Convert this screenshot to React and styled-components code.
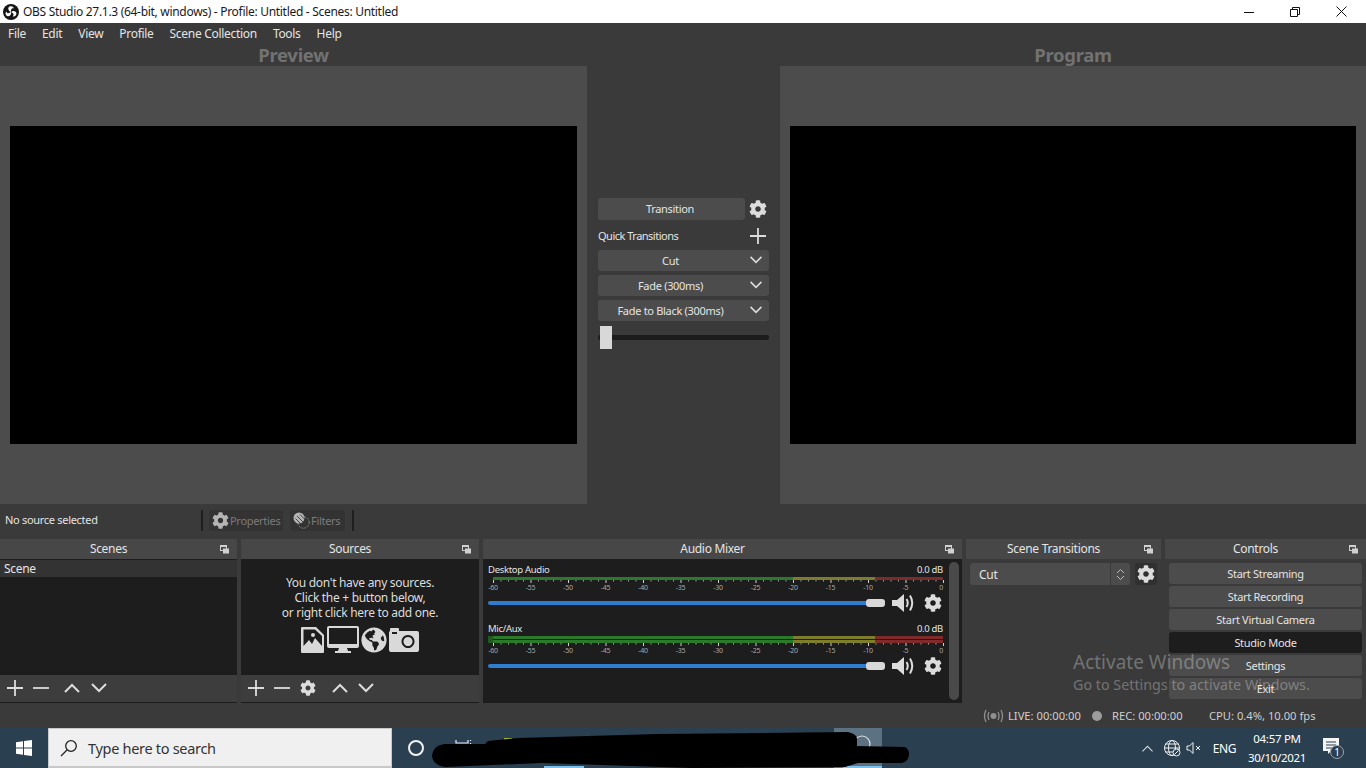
import { createGlobalStyle, styled } from 'styled-components';
import { FaCog, FaGlobeAmericas } from 'react-icons/fa';

const GlobalStyle = createGlobalStyle`
	html, body {
		margin: 0;
		width: 1366px;
		height: 768px;
		overflow: hidden;
		background: #3a3a3a;
	}
	* {
		box-sizing: border-box;
	}
	body {
		font-family: "Noto Sans", "Open Sans", "Liberation Sans", sans-serif;
		font-size: 11px;
		letter-spacing: -0.3px;
		color: #e4e4e4;
	}
`;

const Page = styled.div`
	position: relative;
	width: 1366px;
	height: 768px;
	display: flex;
	flex-direction: column;
	overflow: hidden;
`;

const TitleBar = styled.div`
	height: 23px;
	background: #fff;
	color: #1a1a1a;
	display: flex;
	align-items: center;
	padding: 0 2px 0 3px;
	gap: 4px;
	font-size: 12px;
`;

const TitleText = styled.div`
	flex: 1;
	white-space: nowrap;
`;

const WinButtons = styled.div`
	display: flex;
`;

const WinButton = styled.div`
	width: 46px;
	height: 23px;
	display: flex;
	align-items: center;
	justify-content: center;
`;

const MenuBar = styled.div`
	height: 22px;
	display: flex;
	align-items: center;
	background: #3a3a3a;
	font-size: 12px;
	padding-bottom: 2px;
`;

const MenuItem = styled.div`
	padding: 0 8px;
	white-space: nowrap;
`;

const Main = styled.div`
	height: 459px;
	display: grid;
	grid-template-columns: 587px 193px 586px;
`;

const PreviewColumn = styled.div`
	display: flex;
	flex-direction: column;
`;

const PreviewLabel = styled.div`
	height: 21px;
	line-height: 19px;
	text-align: center;
	font-weight: 700;
	font-size: 18.5px;
	color: #727272;
`;

const PreviewPanel = styled.div`
	flex: 1;
	background: #4c4c4c;
	display: flex;
	align-items: center;
	justify-content: center;
`;

const Screen = styled.div`
	width: ${(p) => p.$width}px;
	height: 318px;
	background: #000;
`;

const CenterColumn = styled.div`
	padding: 153px 11px 0;
	display: flex;
	flex-direction: column;
	background: #3a3a3a;
`;

const CenterRow = styled.div`
	display: flex;
	align-items: center;
	justify-content: space-between;
	height: ${(p) => p.$height}px;
	margin-bottom: ${(p) => p.$gap || 0}px;
`;

const QuickLabel = styled.span`
	letter-spacing: -0.5px;
`;

const RowIcon = styled.div`
	width: 22px;
	display: flex;
	justify-content: center;
	color: #dcdcdc;
`;

const Button = styled.div`
	height: ${(p) => p.$height || 21}px;
	width: ${(p) => (p.$width ? `${p.$width}px` : 'auto')};
	flex: ${(p) => (p.$width ? 'none' : 1)};
	background: ${(p) => (p.$active ? '#1d1d1e' : '#4c4c4c')};
	border-radius: 3px;
	display: flex;
	align-items: center;
	justify-content: center;
	white-space: nowrap;
`;

const TransitionButton = styled(Button)`
	padding: 0 3px 2px 0;
`;

const ComboButton = styled(Button)`
	position: relative;
	padding-right: 26px;
	& > svg {
		position: absolute;
		right: 6px;
		top: 3px;
	}
`;

const ControlButton = styled(Button)`
	flex: none;
`;

const TBar = styled.div`
	position: relative;
	height: 23px;
	display: flex;
	align-items: center;
	margin-top: 1px;
`;

const TBarTrack = styled.div`
	flex: 1;
	height: 5px;
	background: #1c1c1c;
	border-radius: 2px;
`;

const TBarHandle = styled.div`
	position: absolute;
	left: 2px;
	top: 0;
	width: 12px;
	height: 23px;
	background: #d8d8d8;
`;

const ContextBar = styled.div`
	height: 32px;
	display: flex;
	align-items: center;
	background: #3a3a3a;
	padding-left: 5px;
`;

const ContextLabel = styled.div`
	width: 196px;
	white-space: nowrap;
	padding-bottom: 2px;
`;

const ContextSep = styled.div`
	width: 2px;
	height: 21px;
	background: #1f1f1f;
	margin-right: ${(p) => p.$gap}px;
`;

const ContextButton = styled.div`
	height: 21px;
	width: ${(p) => p.$width}px;
	margin-right: ${(p) => p.$gap}px;
	padding-left: 3px;
	background: #333;
	border-radius: 3px;
	color: #7b7b7b;
	display: flex;
	align-items: center;
	gap: 1px;
	white-space: nowrap;
`;

const Docks = styled.div`
	margin-top: 3px;
	height: 164px;
	display: grid;
	grid-template-columns: 237px 238px 479px 195px 201px;
	column-gap: 4px;
`;

const Dock = styled.div`
	display: flex;
	flex-direction: column;
	min-width: 0;
`;

const DockHeader = styled.div`
	height: 20px;
	flex: none;
	background: #474747;
	display: flex;
	align-items: center;
	padding-right: 8px;
	font-size: 12px;
`;

const DockTitle = styled.div`
	flex: 1;
	text-align: center;
	white-space: nowrap;
	padding: 0 3px 2px 0;
`;

const DockBody = styled.div`
	flex: 1;
	display: flex;
	flex-direction: column;
	background: ${(p) => (p.$plain ? '#3a3a3a' : '#1d1d1e')};
	min-height: 0;
`;

const SceneItem = styled.div`
	height: 17px;
	margin-top: 1px;
	line-height: 17px;
	padding-left: 4px;
	background: #333334;
	font-size: 12px;
`;

const ListArea = styled.div`
	flex: 1;
`;

const EmptyHint = styled.div`
	flex: 1;
	display: flex;
	flex-direction: column;
	align-items: center;
	padding-top: 16px;
	line-height: 15px;
	font-size: 12px;
	text-align: center;
	color: #dcdcdc;
`;

const HintIcons = styled.div`
	display: flex;
	align-items: center;
	gap: 2px;
	margin: 6px 1px 0 0;
	color: #d9d9d9;
`;

const Toolbar = styled.div`
	height: 28px;
	flex: none;
	background: #3d3d3d;
	border-bottom: 1px solid #1c1c1c;
	display: flex;
	align-items: center;
	padding: 0 0 2px 2px;
`;

const ToolButton = styled.div`
	width: 26px;
	height: 25px;
	display: flex;
	align-items: center;
	justify-content: center;
	margin-left: ${(p) => p.$gap || 0}px;
	color: #dcdcdc;
`;

const MixerBody = styled.div`
	position: relative;
	flex: 1;
	background: #1d1d1e;
	padding: 4px 5px 0;
`;

const Scrollbar = styled.div`
	position: absolute;
	right: 3px;
	top: 3px;
	bottom: 3px;
	width: 10px;
	border-radius: 5px;
	background: #4a4a4a;
`;

const Channel = styled.div`
	margin-bottom: 7px;
`;

const ChannelHead = styled.div`
	width: 455px;
	height: 12px;
	line-height: 14px;
	margin-bottom: 2px;
	display: flex;
	justify-content: space-between;
	font-size: 9.5px;
`;

const MeterSvg = styled.svg`
	display: block;
`;

const Fader = styled.div`
	height: 24px;
	display: flex;
	align-items: center;
`;

const FaderTrack = styled.div`
	position: relative;
	width: 397px;
	height: 4px;
	border-radius: 2px;
	background: #2f7dd1;
	margin-right: 7px;
`;

const FaderHandle = styled.div`
	position: absolute;
	right: 0;
	top: -2px;
	width: 19px;
	height: 8px;
	border-radius: 3px;
	background: #d8d8d8;
`;

const FaderGear = styled.div`
	margin-left: 9px;
	display: flex;
	color: #dcdcdc;
`;

const TransitionRow = styled.div`
	display: flex;
	padding: 4px 4px 0;
	gap: 5px;
`;

const Select = styled.div`
	width: 160px;
	height: 22px;
	background: #4c4c4c;
	border-radius: 3px;
	display: flex;
	align-items: center;
	padding-left: 9px;
	font-size: 12px;
`;

const SelectText = styled.div`
	flex: 1;
`;

const SelectSpin = styled.div`
	width: 20px;
	height: 22px;
	border-left: 1px solid #3a3a3a;
	display: flex;
	align-items: center;
	justify-content: center;
`;

const DarkGear = styled.div`
	width: 22px;
	height: 22px;
	background: #303030;
	border-radius: 3px;
	display: flex;
	align-items: center;
	justify-content: center;
	color: #dcdcdc;
`;

const ControlsList = styled.div`
	display: flex;
	flex-direction: column;
	gap: 2px;
	padding: 4px 4px 0;
`;

const StatusBar = styled.div`
	height: 25px;
	display: flex;
	align-items: center;
	background: #3a3a3a;
	padding-left: 983px;
	color: #cfcfcf;
	font-size: 11.2px;
	letter-spacing: 0;
	white-space: nowrap;
`;

const StatusItem = styled.div`
	display: flex;
	align-items: center;
	width: ${(p) => p.$width}px;
	gap: ${(p) => p.$gap || 0}px;
`;

const RecDot = styled.div`
	width: 10px;
	height: 10px;
	border-radius: 50%;
	background: #9c9c9c;
`;

const Taskbar = styled.div`
	position: relative;
	height: 40px;
	background: #2a3f50;
	display: flex;
	align-items: center;
	color: #fff;
`;

const StartButton = styled.div`
	width: 48px;
	display: flex;
	justify-content: center;
`;

const SearchBox = styled.div`
	width: 344px;
	height: 40px;
	background: #f0f0f0;
	border: 1px solid #c8c8c8;
	border-bottom-width: 2px;
	color: #333;
	font-size: 14.5px;
	display: flex;
	align-items: center;
	padding-left: 11px;
	gap: 10px;
`;

const CortanaRing = styled.div`
	width: 16px;
	height: 16px;
	margin-left: 16px;
	border: 2.5px solid #f2f2f2;
	border-radius: 50%;
`;

const TaskTile = styled.div`
	position: absolute;
	left: 834px;
	top: 0;
	width: 48px;
	height: 40px;
	background: #5c7182;
`;

const TaskUnderline = styled.div`
	position: absolute;
	left: ${(p) => p.$left}px;
	bottom: 0;
	width: ${(p) => p.$width}px;
	height: 2px;
	background: #7cc1ee;
`;

const Scribble = styled.svg`
	position: absolute;
	left: 425px;
	top: 0;
`;

const Tray = styled.div`
	margin-left: auto;
	height: 40px;
	display: flex;
	align-items: center;
	padding-right: 7px;
`;

const TraySlot = styled.div`
	width: ${(p) => p.$width}px;
	display: flex;
	justify-content: center;
	align-items: center;
	font-size: ${(p) => p.$size || 12}px;
`;

const Clock = styled.div`
	text-align: center;
	line-height: 19px;
	font-size: 11.5px;
	width: 60px;
	white-space: nowrap;
`;

const ActivateNotice = styled.div`
	position: absolute;
	left: 1073px;
	top: 650px;
	color: rgba(255, 255, 255, 0.3);
	letter-spacing: 0;
	pointer-events: none;
	white-space: nowrap;
`;

const ActivateTitle = styled.div`
	font-size: 19px;
	line-height: 25px;
`;

const ActivateLine = styled.div`
	font-size: 14.3px;
	line-height: 20px;
`;

const ObsLogo = () => (
	<svg width="16" height="16" viewBox="0 0 16 16">
		<circle cx="8" cy="8" r="8" fill="#151515" />
		{[0, 120, 240].map((angle) => (
			<path
				key={angle}
				d="M8 8 C5 7 4.5 4 6.5 2.6 C8.5 1.6 10.5 2.6 10.8 4.4 C9 3.6 7.6 5 8 8 Z"
				fill="#fff"
				transform={`rotate(${angle} 8 8)`}
			/>
		))}
	</svg>
);

const Chevron = ({ up, size = 18, width = 2 }) => (
	<svg width={size} height={size} viewBox="0 0 18 18" fill="none" stroke="#dcdcdc" strokeWidth={width}>
		<path d={up ? 'M2 13 L9 6 L16 13' : 'M2 5 L9 12 L16 5'} />
	</svg>
);

const Plus = ({ size = 16 }) => (
	<svg width={size} height={size} viewBox="0 0 16 16" stroke="#dcdcdc" strokeWidth="1.8">
		<path d="M8 0 V16 M0 8 H16" />
	</svg>
);

const Minus = () => (
	<svg width="16" height="16" viewBox="0 0 16 16" stroke="#dcdcdc" strokeWidth="1.8">
		<path d="M0 8 H16" />
	</svg>
);

const FloatIcon = () => (
	<svg width="9" height="9" viewBox="0 0 9 9">
		<rect x="0.5" y="0.5" width="6" height="5" fill="none" stroke="#d0d0d0" />
		<rect x="0.5" y="0.5" width="6" height="1.5" fill="#d0d0d0" />
		<rect x="3" y="3.5" width="6" height="5" fill="#d0d0d0" />
	</svg>
);

const Speaker = () => (
	<svg width="23" height="20" viewBox="0 0 23 20" fill="none">
		<path d="M0 7 H5 L12 1 V19 L5 13 H0 Z" fill="#dcdcdc" />
		<path d="M14.5 6 Q17 10 14.5 14" stroke="#dcdcdc" strokeWidth="2" />
		<path d="M18 2.5 Q22.5 10 18 17.5" stroke="#dcdcdc" strokeWidth="2" />
	</svg>
);

const ImageIcon = () => (
	<svg width="24" height="26" viewBox="0 0 24 26">
		<path
			fillRule="evenodd"
			d="M1 0 H15 L23 8 V25 a1 1 0 0 1 -1 1 H1 a1 1 0 0 1 -1 -1 V1 a1 1 0 0 1 1 -1 Z M2.5 2.5 V19 L8 13 L11 17 L14 11 L21 19 V9 L14 2.5 Z"
			fill="currentColor"
		/>
		<circle cx="12" cy="8" r="2" fill="currentColor" />
	</svg>
);

const MonitorIcon = () => (
	<svg width="32" height="27" viewBox="0 0 32 27">
		<path
			fillRule="evenodd"
			d="M2 0 H30 a2 2 0 0 1 2 2 V20 a2 2 0 0 1 -2 2 H20 L21 25 H24 V27 H8 V25 H11 L12 22 H2 a2 2 0 0 1 -2 -2 V2 a2 2 0 0 1 2 -2 Z M2 2 V18 H30 V2 Z"
			fill="currentColor"
		/>
	</svg>
);

const CameraIcon = () => (
	<svg width="30" height="24" viewBox="0 0 30 24">
		<path
			fillRule="evenodd"
			d="M1 3 V1 a1 1 0 0 1 1 -1 H9 a1 1 0 0 1 1 1 V3 H28 a2 2 0 0 1 2 2 V22 a2 2 0 0 1 -2 2 H2 a2 2 0 0 1 -2 -2 V5 a2 2 0 0 1 1 -2 Z M3 4 V6 H8 V4 Z M19 7 a6.5 6.5 0 1 0 0.01 0 Z M19 9 a4.5 4.5 0 1 1 -0.01 0 Z"
			fill="currentColor"
		/>
	</svg>
);

const FilterIcon = () => (
	<svg width="17" height="17" viewBox="0 0 17 17" fill="none">
		<circle cx="10.5" cy="10.5" r="5.7" stroke="#9a9a9a" strokeWidth="1" strokeDasharray="1.6 1.4" />
		<circle cx="6" cy="6" r="5.5" fill="#b4b4b4" />
		<path d="M4 4 L11 11 M2.5 6.5 L8 12 M7 2.5 L13 8.5" stroke="#3a3a3a" strokeWidth="0.9" />
	</svg>
);

const Meter = ({ stereo }) => {
	const barHeight = stereo ? 7 : 3;
	const x0 = 5;
	const scale = 7.5;
	const labels = [-60, -55, -50, -45, -40, -35, -30, -25, -20, -15, -10, -5, 0];
	const ticks = Array.from({ length: 61 }, (_, i) => i);
	const segments = [
		{ x: x0, w: 300, c: '#2b7a2b' },
		{ x: 305, w: 82, c: '#7d7d2b' },
		{ x: 387, w: 68, c: '#7f2b2b' },
	];
	return (
		<MeterSvg width="460" height={barHeight + 11} viewBox={`0 0 460 ${barHeight + 11}`}>
			{segments.map((s) =>
				stereo ? (
					<g key={s.x}>
						<rect x={s.x} y="0" width={s.w} height="3" fill={s.c} />
						<rect x={s.x} y="4" width={s.w} height="3" fill={s.c} />
					</g>
				) : (
					<rect key={s.x} x={s.x} y="0" width={s.w} height="3" fill={s.c} />
				),
			)}
			{stereo && <rect x="0" y="0" width="5" height="7" fill="#1f5a1f" />}
			{ticks.map((i) => (
				<rect
					key={i}
					x={x0 + i * scale}
					y={barHeight}
					width="1"
					height={i % 5 === 0 ? 3 : 1.5}
					fill={i % 5 === 0 ? '#d0d0d0' : '#9a9a9a'}
				/>
			))}
			{labels.map((db) => (
				<text
					key={db}
					x={db === 0 ? 455 : x0 + (db + 60) * scale}
					y={barHeight + 10}
					textAnchor={db === 0 ? 'end' : 'middle'}
					fontSize="7"
					fill="#a8a8a8"
				>
					{db}
				</text>
			))}
		</MeterSvg>
	);
};

const MixerChannel = ({ name, stereo }) => (
	<Channel>
		<ChannelHead>
			<span>{name}</span>
			<span>0.0 dB</span>
		</ChannelHead>
		<Meter stereo={stereo} />
		<Fader>
			<FaderTrack>
				<FaderHandle />
			</FaderTrack>
			<Speaker />
			<FaderGear>
				<FaCog size={18} />
			</FaderGear>
		</Fader>
	</Channel>
);

const DockPanel = ({ title, children }) => (
	<Dock>
		<DockHeader>
			<DockTitle>{title}</DockTitle>
			<FloatIcon />
		</DockHeader>
		{children}
	</Dock>
);

const menus = ['File', 'Edit', 'View', 'Profile', 'Scene Collection', 'Tools', 'Help'];
const controls = ['Start Streaming', 'Start Recording', 'Start Virtual Camera', 'Studio Mode', 'Settings', 'Exit'];
const combos = ['Cut', 'Fade (300ms)', 'Fade to Black (300ms)'];

export default function App() {
	return (
		<Page>
			<GlobalStyle />
			<TitleBar>
				<ObsLogo />
				<TitleText>OBS Studio 27.1.3 (64-bit, windows) - Profile: Untitled - Scenes: Untitled</TitleText>
				<WinButtons>
					<WinButton>
						<svg width="10" height="10" viewBox="0 0 10 10" stroke="#111">
							<path d="M0 5.5 H10" />
						</svg>
					</WinButton>
					<WinButton>
						<svg width="10" height="10" viewBox="0 0 10 10" fill="none" stroke="#111">
							<path d="M0.5 2.5 H7.5 V9.5 H0.5 Z M2.5 2.5 V0.5 H9.5 V7.5 H7.5" />
						</svg>
					</WinButton>
					<WinButton>
						<svg width="11" height="11" viewBox="0 0 11 11" stroke="#111">
							<path d="M0.5 0.5 L10.5 10.5 M10.5 0.5 L0.5 10.5" />
						</svg>
					</WinButton>
				</WinButtons>
			</TitleBar>
			<MenuBar>
				{menus.map((menu) => (
					<MenuItem key={menu}>{menu}</MenuItem>
				))}
			</MenuBar>
			<Main>
				<PreviewColumn>
					<PreviewLabel>Preview</PreviewLabel>
					<PreviewPanel>
						<Screen $width={567} />
					</PreviewPanel>
				</PreviewColumn>
				<CenterColumn>
					<CenterRow $height={22} $gap={5}>
						<TransitionButton $width={147} $height={22}>Transition</TransitionButton>
						<RowIcon><FaCog size={18} /></RowIcon>
					</CenterRow>
					<CenterRow $height={21} $gap={4}>
						<QuickLabel>Quick Transitions</QuickLabel>
						<RowIcon><Plus /></RowIcon>
					</CenterRow>
					{combos.map((combo) => (
						<CenterRow key={combo} $height={21} $gap={4}>
							<ComboButton>
								{combo}
								<Chevron size={14} />
							</ComboButton>
						</CenterRow>
					))}
					<TBar>
						<TBarTrack />
						<TBarHandle />
					</TBar>
				</CenterColumn>
				<PreviewColumn>
					<PreviewLabel>Program</PreviewLabel>
					<PreviewPanel>
						<Screen $width={566} />
					</PreviewPanel>
				</PreviewColumn>
			</Main>
			<ContextBar>
				<ContextLabel>No source selected</ContextLabel>
				<ContextSep $gap={6} />
				<ContextButton $width={74} $gap={7}>
					<FaCog size={17} color="#b4b4b4" />
					Properties
				</ContextButton>
				<ContextButton $width={55} $gap={7}>
					<FilterIcon />
					Filters
				</ContextButton>
				<ContextSep $gap={0} />
			</ContextBar>
			<Docks>
				<DockPanel title="Scenes">
					<DockBody>
						<SceneItem>Scene</SceneItem>
						<ListArea />
						<Toolbar>
							<ToolButton><Plus /></ToolButton>
							<ToolButton><Minus /></ToolButton>
							<ToolButton $gap={5}><Chevron up /></ToolButton>
							<ToolButton $gap={1}><Chevron /></ToolButton>
						</Toolbar>
					</DockBody>
				</DockPanel>
				<DockPanel title="Sources">
					<DockBody>
						<EmptyHint>
							<div>You don't have any sources.</div>
							<div>Click the + button below,</div>
							<div>or right click here to add one.</div>
							<HintIcons>
								<ImageIcon />
								<MonitorIcon />
								<FaGlobeAmericas size={26} />
								<CameraIcon />
							</HintIcons>
						</EmptyHint>
						<Toolbar>
							<ToolButton><Plus /></ToolButton>
							<ToolButton><Minus /></ToolButton>
							<ToolButton><FaCog size={16} /></ToolButton>
							<ToolButton $gap={6}><Chevron up /></ToolButton>
							<ToolButton><Chevron /></ToolButton>
						</Toolbar>
					</DockBody>
				</DockPanel>
				<DockPanel title="Audio Mixer">
					<MixerBody>
						<MixerChannel name="Desktop Audio" />
						<MixerChannel name="Mic/Aux" stereo />
						<Scrollbar />
					</MixerBody>
				</DockPanel>
				<DockPanel title="Scene Transitions">
					<DockBody $plain>
						<TransitionRow>
							<Select>
								<SelectText>Cut</SelectText>
								<SelectSpin>
									<svg width="9" height="13" viewBox="0 0 9 13" fill="none" stroke="#bdbdbd">
										<path d="M1 5 L4.5 1.5 L8 5 M1 8 L4.5 11.5 L8 8" />
									</svg>
								</SelectSpin>
							</Select>
							<DarkGear>
								<FaCog size={18} />
							</DarkGear>
						</TransitionRow>
					</DockBody>
				</DockPanel>
				<DockPanel title="Controls">
					<DockBody $plain>
						<ControlsList>
							{controls.map((label) => (
								<ControlButton key={label} $active={label === 'Studio Mode'}>{label}</ControlButton>
							))}
						</ControlsList>
					</DockBody>
				</DockPanel>
			</Docks>
			<StatusBar>
				<StatusItem $width={109} $gap={4}>
					<svg width="21" height="14" viewBox="0 0 21 14" fill="none" stroke="#8f8f8f" strokeWidth="1.3">
						<circle cx="10.5" cy="7" r="3" fill="#8f8f8f" stroke="none" />
						<path d="M6 3 Q4 7 6 11 M15 3 Q17 7 15 11 M3 1 Q0 7 3 13 M18 1 Q21 7 18 13" />
					</svg>
					LIVE: 00:00:00
				</StatusItem>
				<StatusItem $width={117} $gap={10}>
					<RecDot />
					REC: 00:00:00
				</StatusItem>
				<StatusItem $width={120}>CPU: 0.4%, 10.00 fps</StatusItem>
			</StatusBar>
			<Taskbar>
				<StartButton>
					<svg width="16" height="16" viewBox="0 0 16 16" fill="#fff">
						<path d="M0 2.3 L7 1.2 V7.5 H0 Z M8 1 L16 0 V7.5 H8 Z M0 8.5 H7 V14.8 L0 13.7 Z M8 8.5 H16 V16 L8 15 Z" />
					</svg>
				</StartButton>
				<SearchBox>
					<svg width="18" height="18" viewBox="0 0 18 18" fill="none" stroke="#222" strokeWidth="1.3">
						<circle cx="11" cy="7" r="5.3" />
						<path d="M7 11 L1 17" />
					</svg>
					Type here to search
				</SearchBox>
				<CortanaRing />
				<TaskTile />
				<TaskUnderline $left={544} $width={40} />
				<TaskUnderline $left={843} $width={39} />
				<Scribble width="490" height="40" viewBox="0 0 490 40">
					<path d="M31 12 V15 H43 V12 M45.5 12 V13 M45.5 15 V16" fill="none" stroke="#eef" strokeWidth="1.2" />
					<rect x="79" y="10" width="8" height="4" fill="#a8b820" />
					<circle cx="437" cy="16" r="8" fill="none" stroke="#e0e0e0" strokeWidth="1.2" />
					<path
						d="M7 28 Q8 17 20 16 L60 16 L63 13 L93 10 L233 6 L423 4 Q432 6 432 11 L432 18 L480 19 Q484 21 484 26 Q484 33 477 35 L433 35 L420 39 L267 40 L117 35 L20 39 Q8 37 7 28 Z"
						fill="#000"
					/>
				</Scribble>
				<Tray>
					<TraySlot $width={26}>
						<Chevron up size={13} width={1.4} />
					</TraySlot>
					<TraySlot $width={24}>
						<svg width="18" height="18" viewBox="0 0 18 18" fill="none" stroke="#f0f0f0" strokeWidth="1">
							<circle cx="9" cy="9" r="7.5" />
							<ellipse cx="9" cy="9" rx="3.5" ry="7.5" />
							<path d="M1.5 9 H16.5 M2.5 5 H15.5 M2.5 13 H15.5" />
							<circle cx="13.5" cy="13.5" r="3.5" fill="#2a3f50" />
							<path d="M11.5 15.5 L15.5 11.5" />
						</svg>
					</TraySlot>
					<TraySlot $width={18}>
						<svg width="15" height="14" viewBox="0 0 15 14" fill="none" stroke="#f0f0f0" strokeWidth="1">
							<path d="M1 5 H3.5 L7 1.5 V12.5 L3.5 9 H1 Z M10 5 L14 9 M14 5 L10 9" />
						</svg>
					</TraySlot>
					<TraySlot $width={45} $size={12}>ENG</TraySlot>
					<Clock>
						<div>04:57 PM</div>
						<div>30/10/2021</div>
					</Clock>
					<TraySlot $width={52}>
						<svg width="24" height="24" viewBox="0 0 24 24">
							<path d="M2 2 H18 V15 H10 L7 18 V15 H2 Z" fill="#f4f4f4" />
							<path d="M5 6 H15 M5 9 H15 M5 12 H12" stroke="#2a3f50" strokeWidth="1" />
							<circle cx="16" cy="16" r="6.5" fill="#2a3f50" stroke="#9aa6af" />
							<text x="16" y="19.5" textAnchor="middle" fontSize="10" fill="#fff">1</text>
						</svg>
					</TraySlot>
				</Tray>
			</Taskbar>
			<ActivateNotice>
				<ActivateTitle>Activate Windows</ActivateTitle>
				<ActivateLine>Go to Settings to activate Windows.</ActivateLine>
			</ActivateNotice>
		</Page>
	);
}
